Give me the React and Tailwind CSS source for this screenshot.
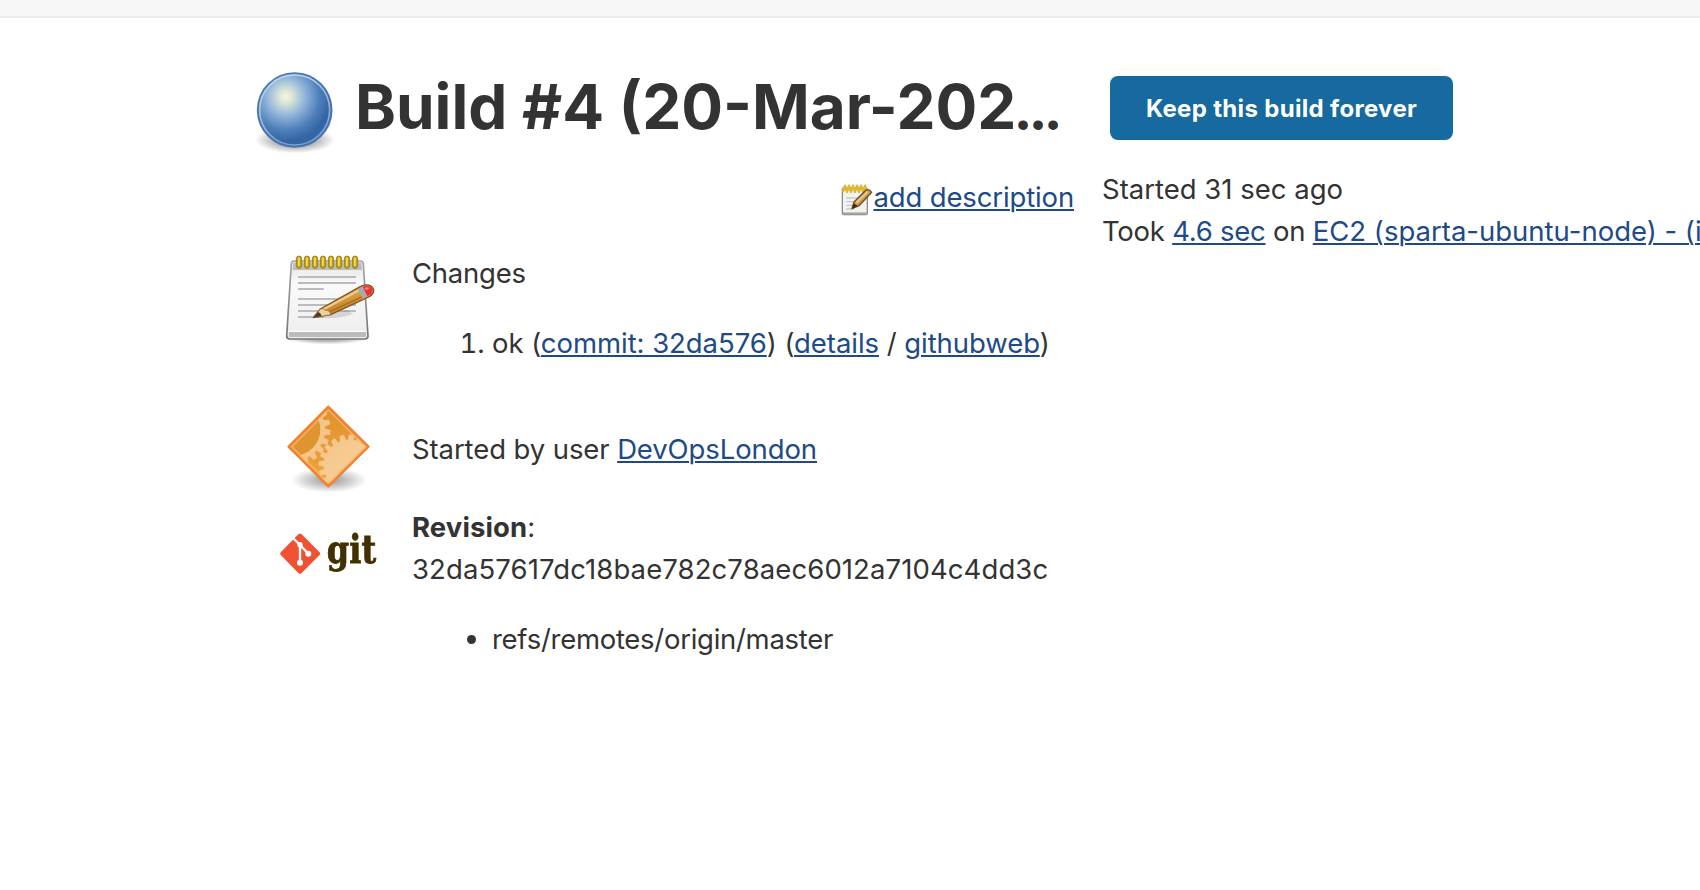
function Link({ children }) {
  return (
    <a href="#" className="text-[#204a87] underline decoration-[2px] underline-offset-[2px]">
      {children}
    </a>
  );
}

function BallIcon() {
  return (
    <svg className="block h-[100px] w-[100px] shrink-0 blur-[0.4px]" viewBox="0 0 300 300">
      <defs>
        <radialGradient id="ball" cx="0.38" cy="0.32" r="0.6">
          <stop offset="0" stopColor="#f6f8dc" />
          <stop offset="0.14" stopColor="#dce6d8" />
          <stop offset="0.45" stopColor="#8db2da" />
          <stop offset="0.75" stopColor="#5080bb" />
          <stop offset="1" stopColor="#3465a4" />
        </radialGradient>
        <linearGradient id="ballRing" x1="0" y1="0" x2="0.4" y2="1">
          <stop offset="0" stopColor="#c3dcea" />
          <stop offset="1" stopColor="#7fa0d0" />
        </linearGradient>
        <radialGradient id="ballShadow">
          <stop offset="0.5" stopColor="#000" stopOpacity="0.3" />
          <stop offset="1" stopColor="#000" stopOpacity="0" />
        </radialGradient>
      </defs>
      <ellipse cx="165" cy="240" rx="120" ry="40" fill="url(#ballShadow)" />
      <circle cx="164" cy="150" r="111" fill="url(#ball)" stroke="#4a74b4" strokeWidth="5" />
      <circle cx="164" cy="150" r="105" fill="none" stroke="url(#ballRing)" strokeWidth="5" />
    </svg>
  );
}

function NotepadIcon() {
  return (
    <svg className="block h-[110px] w-[120px] blur-[0.5px]" viewBox="0 0 360 330">
      <defs>
        <linearGradient id="paper" x1="0" y1="0" x2="0" y2="1">
          <stop offset="0" stopColor="#e2e2e2" />
          <stop offset="0.3" stopColor="#fafafa" />
          <stop offset="1" stopColor="#ececec" />
        </linearGradient>
        <linearGradient id="paperEdge" x1="0" y1="0" x2="0" y2="1">
          <stop offset="0" stopColor="#a8a8a8" />
          <stop offset="1" stopColor="#747474" />
        </linearGradient>
        <linearGradient id="wood" x1="0" y1="0" x2="0.45" y2="1">
          <stop offset="0.2" stopColor="#eab765" />
          <stop offset="0.8" stopColor="#c08327" />
        </linearGradient>
        <radialGradient id="padShadow">
          <stop offset="0.4" stopColor="#000" stopOpacity="0.3" />
          <stop offset="1" stopColor="#000" stopOpacity="0" />
        </radialGradient>
      </defs>
      <ellipse cx="172" cy="296" rx="124" ry="17" fill="url(#padShadow)" />
      <path d="M72 63H272Q279 63 280 71L294 288Q294 297 285 297H59Q50 297 50 288L64 71Q65 63 72 63Z" fill="url(#paper)" stroke="url(#paperEdge)" strokeWidth="5" />
      <path d="M70 68H274L276 90H68Z" fill="#bdbdbd" />
      <path d="M57 276H288V291H57Z" fill="#bcbcbc" />
      <path d="M57 274H288" stroke="#fff" strokeWidth="3" />
      <path d="M84 111H258M84 129H258M84 147H161M84 177H258M84 195H258M84 213H258M84 231H160" stroke="#bcbcbc" strokeWidth="6" />
      {[87, 111, 135, 159, 183, 207, 231, 255].map((x) => (
        <g key={x}>
          <rect x={x - 8} y="48" width="16" height="37" rx="8" fill="#c4a216" stroke="#92740e" strokeWidth="2.5" />
          <rect x={x - 3} y="52" width="5" height="26" rx="2.5" fill="#f0df5c" />
        </g>
      ))}
      <path d="M135 232Q205 240 250 222L230 210Z" fill="#000" opacity="0.12" />
      <path d="M130 233L151 207L272 139Q300 128 310 146Q315 164 290 174L182 224Z" fill="url(#wood)" stroke="#7a5626" strokeWidth="4" strokeLinejoin="round" />
      <path d="M157 210L274 147" stroke="#f1cb87" strokeWidth="6" />
      <path d="M169 219L284 167" stroke="#a66e1d" strokeWidth="4" />
      <path d="M130 233L151 207Q163 204 166 211Q181 211 182 224Z" fill="#efd19a" stroke="#8a682f" strokeWidth="2" />
      <path d="M130 233L144 216Q152 218 155 228Z" fill="#4a3820" />
      <path d="M263 147L276 140L292 169L278 176Z" fill="#aaa9ae" />
      <path d="M278 140Q300 131 307 148Q310 161 292 168Z" fill="#ee2e38" />
      <path d="M283 145Q292 139 299 145L290 151Z" fill="#ff8588" />
    </svg>
  );
}

const toothed = (cx, cy, r, depth, teeth, phase) => {
  const pts = [];
  for (let i = 0; i < teeth; i++) {
    [[-0.32, r - depth], [-0.2, r], [0.2, r], [0.32, r - depth]].forEach(([o, rad]) => {
      const a = ((i + o + phase) / teeth) * Math.PI * 2;
      pts.push(`${(cx + rad * Math.cos(a)).toFixed(1)} ${(cy + rad * Math.sin(a)).toFixed(1)}`);
    });
  }
  return `M${pts.join("L")}Z`;
};

function GearIcon() {
  return (
    <svg className="block h-[110px] w-[120px] blur-[0.5px]" viewBox="0 0 360 330">
      <defs>
        <radialGradient id="gearShadow">
          <stop offset="0.1" stopColor="#000" stopOpacity="0.38" />
          <stop offset="1" stopColor="#000" stopOpacity="0" />
        </radialGradient>
        <linearGradient id="gearBase" x1="0" y1="0" x2="0" y2="1">
          <stop offset="0" stopColor="#dd902c" />
          <stop offset="1" stopColor="#f3a63f" />
        </linearGradient>
        <linearGradient id="gearLight" x1="0" y1="0" x2="1" y2="1">
          <stop offset="0" stopColor="#f3c387" />
          <stop offset="1" stopColor="#fcd6a0" />
        </linearGradient>
        <clipPath id="diamond">
          <path d="M175 50L296 170L175 290L55 170Z" />
        </clipPath>
      </defs>
      <ellipse cx="177" cy="270" rx="114" ry="38" fill="url(#gearShadow)" />
      <g clipPath="url(#diamond)">
        <rect x="50" y="45" width="250" height="250" fill="url(#gearBase)" />
        <path d={toothed(72, 118, 108, 16, 22, 0.3)} fill="#f4c58a" stroke="#f4c58a" strokeWidth="3" strokeLinejoin="round" />
        <circle cx="72" cy="118" r="79" fill="#e0942f" />
        <path d={toothed(238, 226, 91, 15, 20, 0.2)} fill="url(#gearLight)" stroke="#f4c68c" strokeWidth="3" strokeLinejoin="round" />
      </g>
      <path d="M175 60L286 170L175 280L65 170Z" fill="none" stroke="#f7bd78" strokeWidth="5" opacity="0.75" />
      <path d="M175 51L295 170L175 289L56 170Z" fill="none" stroke="#ef8432" strokeWidth="8" strokeLinejoin="round" />
    </svg>
  );
}

function GitIcon() {
  return (
    <svg className="block h-[80px] w-[120px] blur-[0.5px]" viewBox="0 0 360 240">
      <path d="M85 73Q90 68 95 73L148 126Q153 131 148 136L95 189Q90 194 85 189L33 136Q28 131 33 126Z" fill="#f05133" />
      <path d="M69 84L90 105V158M90 105L114 130" fill="none" stroke="#fff" strokeWidth="7" />
      <circle cx="90" cy="104" r="8" fill="#fff" />
      <circle cx="90" cy="158" r="9" fill="#fff" />
      <circle cx="115" cy="131" r="9" fill="#fff" />
      <text x="0" y="0" transform="translate(170 160) scale(1 1.2)" textLength="149" className="fill-[#413000] stroke-[#413000] stroke-2 font-['DejaVu_Serif',serif] text-[96px] font-bold">git</text>
    </svg>
  );
}

function EditIcon() {
  return (
    <svg className="mt-[8px] block h-[32px] w-[32px] shrink-0 blur-[0.3px]" viewBox="0 0 96 96">
      <rect x="4" y="12" width="75" height="80" rx="5" fill="#f2f2f1" stroke="#8c8c88" strokeWidth="4" />
      <path d="M6 85H77V91H6Z" fill="#aaa9a5" />
      <path d="M16 42H55M16 53H48M16 64H40M16 75H40" stroke="#c9c9c7" strokeWidth="4" />
      <path d="M6 24L12 5L18 24L24 5L30 24L36 5L42 24L48 5L54 24L60 5L66 24L72 5L77 22" fill="none" stroke="#dfb82e" strokeWidth="7" strokeLinejoin="round" />
      <path d="M33 74L39 54L75 18Q85 14 92 25L54 65Z" fill="#c99a53" stroke="#6e5029" strokeWidth="4" strokeLinejoin="round" />
      <path d="M46 56L80 23" stroke="#ecca8c" strokeWidth="6" />
      <path d="M33 74L38 58L50 66Z" fill="#3c2a16" />
    </svg>
  );
}

export default function App() {
  return (
    <div className="h-[890px] w-[1700px] overflow-hidden bg-white font-[Inter,sans-serif] text-[27.5px] leading-[42px] text-[#333333]">
      <header className="h-[18px] border-b-2 border-[#e6ecf0] bg-[#f7f7f7]" />
      <main className="flex">
        <section className="w-[1074px] shrink-0 pl-[240px]">
          <div className="flex h-[142px] pt-[42px]">
            <BallIcon />
            <h1 className="ml-[15px] text-[62px] leading-[94px] font-bold whitespace-nowrap">
              Build #4 (20-Mar-202<span className="-ml-px text-[45px] [-webkit-text-stroke:2px_#333333]">…</span>
            </h1>
          </div>
          <div className="flex justify-end pt-[16px] tracking-[-0.14px]">
            <EditIcon />
            <Link>add description</Link>
          </div>
          <div className="flex pt-[22px] pb-[26px]">
            <div className="h-[102px] w-[142px] pl-[30px]"><NotepadIcon /></div>
            <div className="pt-[12px] pl-[30px]">
              <p className="tracking-[-0.25px]">Changes</p>
              <ol className="list-decimal pt-[28px] pl-[80px] tracking-[-0.05px]">
                <li>ok (<Link>commit: 32da576</Link>) (<Link>details</Link> / <Link>githubweb</Link>)</li>
              </ol>
            </div>
          </div>
          <div className="flex h-[116px]">
            <div className="w-[142px] pl-[30px]"><GearIcon /></div>
            <p className="pt-[38px] pl-[30px] tracking-[-0.1px]">Started by user <Link>DevOpsLondon</Link></p>
          </div>
          <div className="flex">
            <div className="w-[142px] pt-[4px] pl-[30px]"><GitIcon /></div>
            <div className="pl-[30px]">
              <p><b className="tracking-[0.1px]">Revision</b>:</p>
              <p className="tracking-[0.1px]">32da57617dc18bae782c78aec6012a7104c4dd3c</p>
              <ul className="list-disc pt-[28px] pl-[80px] tracking-[-0.28px]">
                <li>refs/remotes/origin/master</li>
              </ul>
            </div>
          </div>
        </section>
        <aside className="pt-[58px] pl-[28px] whitespace-nowrap">
          <button className="ml-[8px] flex h-[64px] w-[343px] items-center justify-center rounded-[8px] bg-[#166aa0] pt-[2px] text-[24px] font-bold tracking-[0.32px] text-white">Keep this build forever</button>
          <div className="pt-[28px]">
            <p>Started 31 sec ago</p>
            <p><span className="tracking-[-0.25px]">Took <Link>4.6 sec</Link> on </span><Link>EC2 (sparta-ubuntu-node) - (i</Link></p>
          </div>
        </aside>
      </main>
    </div>
  );
}
